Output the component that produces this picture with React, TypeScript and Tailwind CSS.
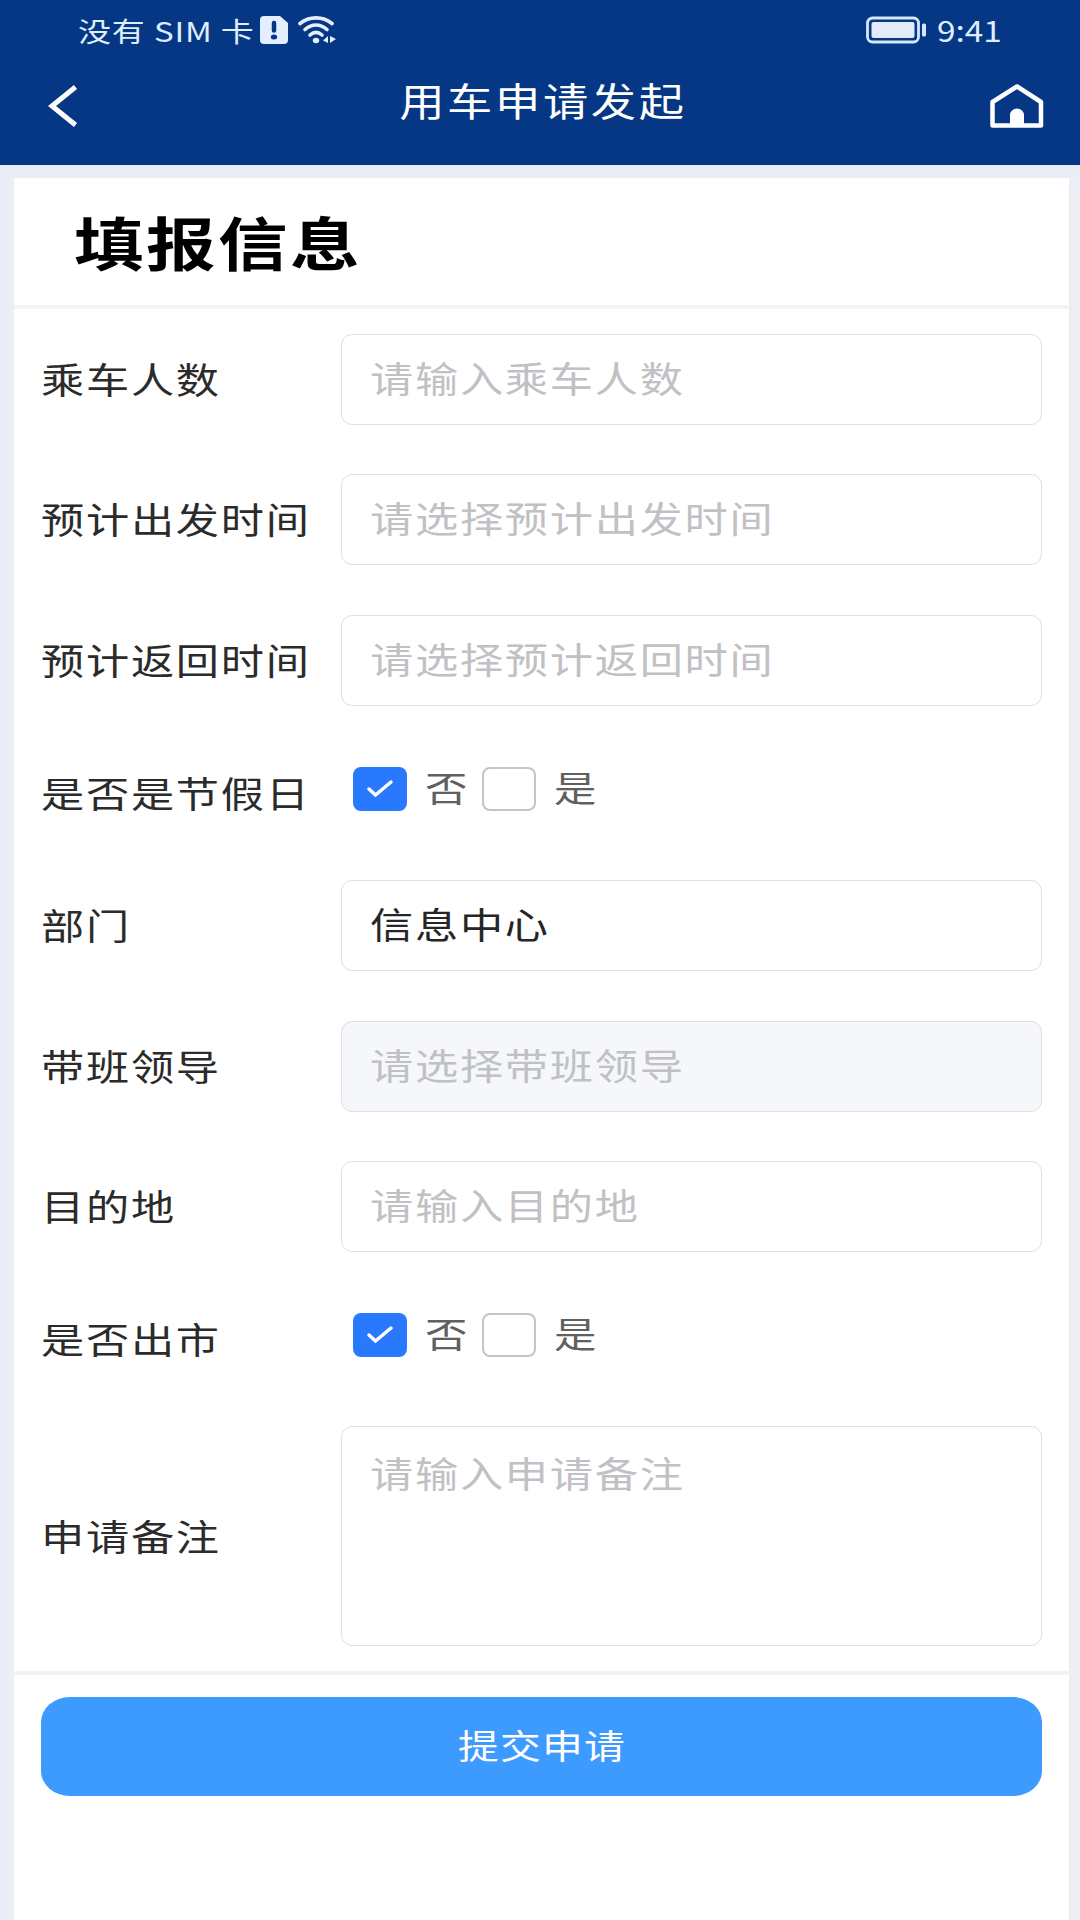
import { useState } from 'react';
import type { ReactNode } from 'react';

const StatusBar = () => (
  <div className="flex h-[60px] items-center justify-between pl-[78px] pr-[79px] text-[#dfeeff]">
    <div className="flex items-center">
      <div className="w-[182px]">
        <span className="inline-block origin-left scale-x-[1.200] whitespace-nowrap text-[27.500px] leading-[36px] tracking-[0.700px]">没有 SIM 卡</span>
      </div>
      <svg className="h-[28px] w-[28px]" viewBox="0 0 28 28">
        <path d="M4 0H20L28 7V24a4 4 0 0 1-4 4H4a4 4 0 0 1-4-4V4a4 4 0 0 1 4-4Z" fill="#e3efff" />
        <path d="M14 7V14.500" stroke="#053784" strokeWidth="4.500" strokeLinecap="round" />
        <ellipse cx="14" cy="21" rx="3.200" ry="2.500" fill="#053784" />
      </svg>
      <svg className="ml-[10px] h-[28px] w-[38px]" viewBox="0 0 38 28" fill="none" stroke="#e3efff" strokeWidth="3.600" strokeLinecap="round">
        <path d="M2 7.500C11 0 25 0 34 7.500" />
        <path d="M7 13.500C14 7.500 22 7.500 29 13.500" />
        <path d="M12 19C16 15.500 20 15.500 24 19" />
        <ellipse cx="18" cy="24.500" rx="3.200" ry="2.700" fill="#e3efff" stroke="none" />
        <path d="M30 20V27L25 24.500ZM32 20L38 23L32 27Z" fill="#e3efff" stroke="none" />
      </svg>
    </div>
    <div className="flex items-center">
      <svg className="h-[28px] w-[62px]" viewBox="0 0 62 28">
        <rect x="1.500" y="2" width="51" height="24" rx="5" fill="none" stroke="#d5e8fb" strokeWidth="2.800" />
        <rect x="5.500" y="6" width="43" height="16" rx="2" fill="#e3ebfa" />
        <rect x="56" y="7.500" width="4" height="13" rx="1.500" fill="#d5e8fb" />
      </svg>
      <div className="mb-[2px] ml-[9px] w-[64px]">
        <span className="inline-block origin-left scale-x-[1.150] whitespace-nowrap text-[29px] leading-[36px]">9:41</span>
      </div>
    </div>
  </div>
);

const NavBar = () => (
  <div className="flex h-[104px] items-start justify-between pl-[48px] pr-[35px]">
    <svg className="mt-[24px] h-[44px] w-[56px]" viewBox="0 0 56 44" fill="none" stroke="#fff" strokeWidth="5">
      <path d="M27.500 3L4 22L27.500 41" />
    </svg>
    <h1 className="mr-[8px] mt-[10px] w-[284px] text-center text-white">
      <span className="-ml-[60px] -mr-[60px] inline-block scale-x-[1.160] whitespace-nowrap text-[39px] leading-[58px] tracking-[2.300px]">用车申请发起</span>
    </h1>
    <svg className="mt-[23px] h-[46px] w-[56px]" viewBox="0 0 56 46">
      <path d="M3.500 19L28 3.500L52 19V42.500H3.500Z" fill="none" stroke="#fff" strokeWidth="4.500" strokeLinejoin="round" />
      <path d="M21 43V32a7 6.500 0 0 1 14 0V43Z" fill="#fff" />
    </svg>
  </div>
);

const FieldText = ({ children, className }: { children: ReactNode; className: string }) => (
  <span className={`inline-block origin-left scale-x-[1.200] whitespace-nowrap text-[36px] leading-[54px] tracking-[1.450px] ${className}`}>
    {children}
  </span>
);

interface RowProps {
  label: string;
  height: string;
  children: ReactNode;
}

const Row = ({ label, height, children }: RowProps) => (
  <div className={`flex items-center pl-[27px] pr-[27px] ${height}`}>
    <div className="mb-[3px] w-[300px] shrink-0">
      <FieldText className="text-[#2b2b2b]">{label}</FieldText>
    </div>
    {children}
  </div>
);

interface InputProps {
  label: string;
  placeholder?: string;
  value?: string;
  disabled?: boolean;
}

const InputRow = ({ label, placeholder, value, disabled }: InputProps) => (
  <Row label={label} height="h-[140.300px]">
    <div className={`flex h-[91px] flex-1 items-center rounded-[11px] border-[1.500px] border-[#dedfe2] pb-[5px] pl-[28px] ${disabled ? 'bg-[#f5f7fb]' : 'bg-white'}`}>
      <FieldText className={value ? 'text-[#262626]' : 'text-[#c0c1c5]'}>{value ?? placeholder}</FieldText>
    </div>
  </Row>
);

const Option = ({ text, checked, onClick }: { text: string; checked: boolean; onClick: () => void }) => (
  <div className="flex w-[129px] items-center" onClick={onClick}>
    {checked ? (
      <div className="flex h-[44px] w-[54px] items-center justify-center rounded-[8px] bg-[#2979ff]">
        <svg className="h-[20px] w-[28px]" viewBox="0 0 28 20" fill="none" stroke="#fff" strokeWidth="3.500" strokeLinecap="round">
          <path d="M3 10L9.500 16L25 3" />
        </svg>
      </div>
    ) : (
      <div className="h-[44px] w-[54px] rounded-[8px] border-2 border-[#c4c5c7] bg-white"></div>
    )}
    <span className="mb-[5px] ml-[18px] inline-block origin-left scale-x-[1.210] text-[35px] leading-[44px] text-[#606060]">{text}</span>
  </div>
);

const CheckRow = ({ label }: { label: string }) => {
  const [value, setValue] = useState('否');

  return (
    <Row label={label} height="h-[125.300px]">
      <div className="mb-[8px] ml-[12px] flex">
        {['否', '是'].map((item) => (
          <Option key={item} text={item} checked={value === item} onClick={() => setValue(item)} />
        ))}
      </div>
    </Row>
  );
};

function App() {
  return (
    <div className="flex h-[1920px] w-[1080px] flex-col overflow-hidden bg-[#e9edf5] font-['Noto_Sans_CJK_SC',sans-serif]">
      <header className="h-[164.500px] shrink-0 bg-[#053784]">
        <StatusBar />
        <NavBar />
      </header>

      <main className="ml-[9px] mt-[13px] flex flex-1 flex-col border-l-[5px] border-[#eeeff2] bg-[#eceef3] pr-[11px]">
        <div className="flex-1 bg-white">
          {/* card title */}
          <div className="mb-px h-[131px] border-b-4 border-[#f2f3f5] pl-[60px] pt-[20px]">
            <h2 className="inline-block origin-left scale-x-[1.200] whitespace-nowrap text-[58px] font-bold leading-[86px] tracking-[2px] text-black">填报信息</h2>
          </div>

          {/* form */}
          <InputRow label="乘车人数" placeholder="请输入乘车人数" />
          <InputRow label="预计出发时间" placeholder="请选择预计出发时间" />
          <InputRow label="预计返回时间" placeholder="请选择预计返回时间" />
          <CheckRow label="是否是节假日" />
          <InputRow label="部门" value="信息中心" />
          <InputRow label="带班领导" placeholder="请选择带班领导" disabled />
          <InputRow label="目的地" placeholder="请输入目的地" />
          <CheckRow label="是否出市" />
          <Row label="申请备注" height="h-[269px]">
            <div className="h-[220px] flex-1 rounded-[11px] border-[1.500px] border-[#dedfe2] pl-[28px] pt-[18px]">
              <FieldText className="text-[#c0c1c5]">请输入申请备注</FieldText>
            </div>
          </Row>

          {/* submit */}
          <div className="border-t-4 border-[#f2f3f5] pl-[27px] pr-[27px] pt-[22px]">
            <button className="h-[99px] w-full rounded-[29px/25px] bg-[#3d9aff] pb-[3px] text-white">
              <span className="inline-block scale-x-[1.200] whitespace-nowrap text-[34px] leading-[50px] tracking-[1px]">提交申请</span>
            </button>
          </div>
        </div>
      </main>
    </div>
  );
}

export default App;
